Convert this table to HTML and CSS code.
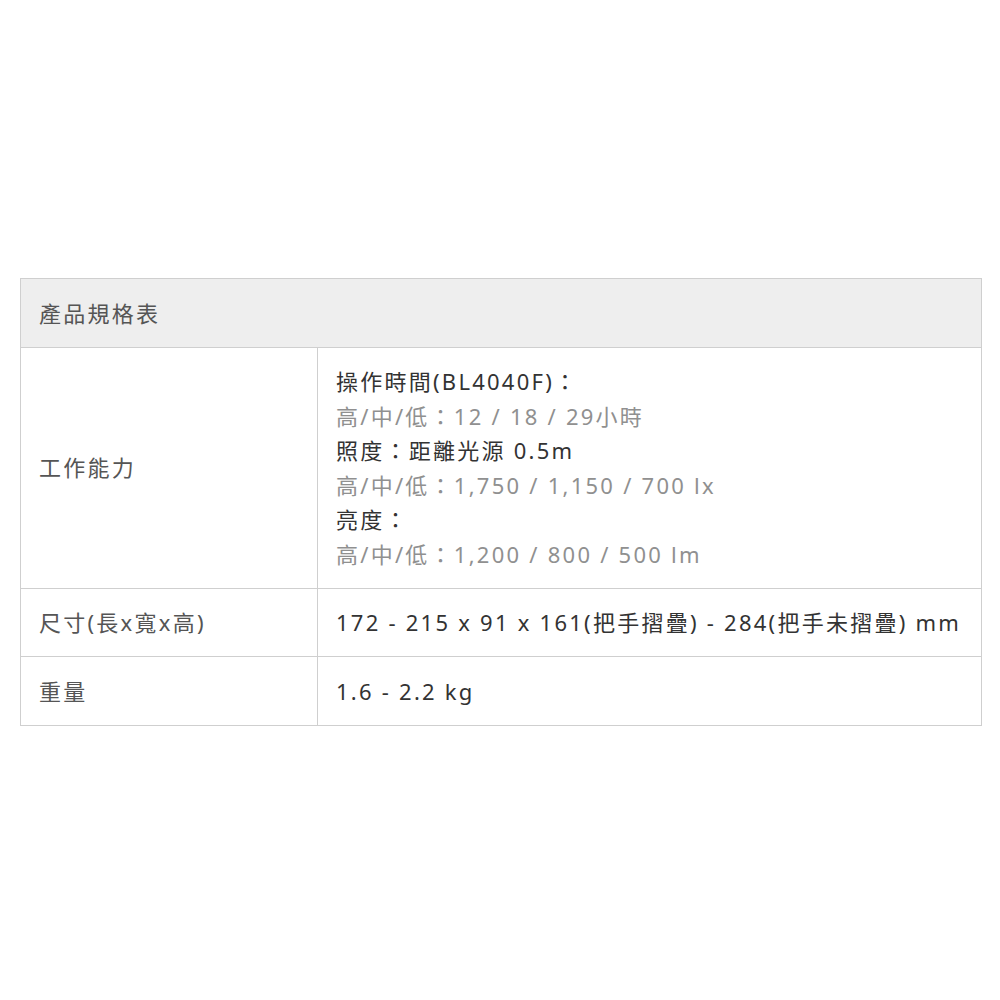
FILE: index.html
```html
<!DOCTYPE html>
<html lang="zh-Hant">
<head>
<meta charset="utf-8">
<link rel="stylesheet" href="styles.css">
</head>
<body>
<div class="page">
<table class="spec">
  <colgroup>
    <col class="col-label">
    <col class="col-value">
  </colgroup>
  <thead>
    <tr><th colspan="2">產品規格表</th></tr>
  </thead>
  <tbody>
    <tr>
      <td class="label">工作能力</td>
      <td class="value">
        <div>操作時間(BL4040F)：</div>
        <div class="sub">高/中/低：12 / 18 / 29小時</div>
        <div>照度：距離光源 0.5m</div>
        <div class="sub">高/中/低：1,750 / 1,150 / 700 lx</div>
        <div>亮度：</div>
        <div class="sub">高/中/低：1,200 / 800 / 500 lm</div>
      </td>
    </tr>
    <tr>
      <td class="label">尺寸(長x寬x高)</td>
      <td class="value">172 - 215 x 91 x 161(把手摺疊) - 284(把手未摺疊) mm</td>
    </tr>
    <tr>
      <td class="label">重量</td>
      <td class="value">1.6 - 2.2 kg</td>
    </tr>
  </tbody>
</table>
</div>
</body>
</html>
```
FILE: styles.css
```css
html, body {
  margin: 0;
  padding: 0;
  background: #fff;
}
.page {
  padding: 278px 18px 0 20px;
}
.spec {
  width: 962px;
  table-layout: fixed;
  border-collapse: collapse;
  font-family: "Noto Sans", "Noto Sans CJK TC", sans-serif;
  font-size: 22px;
  letter-spacing: 2.25px;
  line-height: 34.5px;
  color: #333;
}
.col-label {
  width: 297px;
}
.spec th, .spec td {
  box-sizing: border-box;
  border: 1px solid #cfcfcf;
  padding: 16.5px 18px;
  text-align: left;
  vertical-align: middle;
  font-weight: normal;
}
.spec th {
  background: #eeeeee;
  color: #555;
}
.spec .label {
  color: #555;
}
.spec .value {
  white-space: nowrap;
  padding-right: 4px;
}
.spec .value .sub {
  color: #909090;
}
```
